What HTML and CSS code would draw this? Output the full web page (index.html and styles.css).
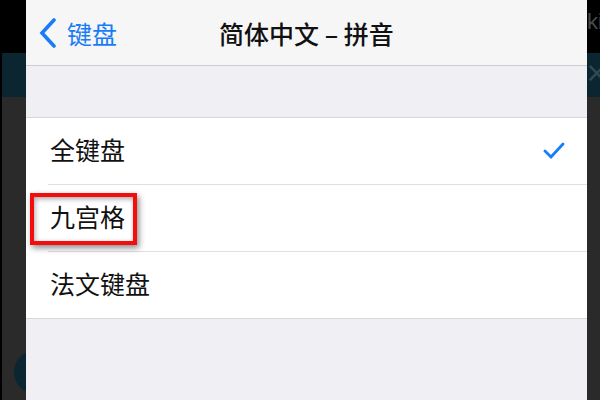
FILE: index.html
```html
<!DOCTYPE html>
<html lang="zh-CN">
<head>
  <meta charset="UTF-8">
  <title>简体中文 – 拼音</title>
  <link rel="stylesheet" href="styles.css">
</head>
<body>
  <div class="screen">
    <div class="side side-left">
      <div class="band-black"></div>
      <div class="band-teal"></div>
      <div class="band-dark">
        <div class="blob"></div>
      </div>
    </div>

    <div class="panel">
      <div class="navbar">
        <div class="back">
          <svg width="20" height="30" viewBox="0 0 20 30">
            <path d="M16 2 L4 15 L16 28" fill="none" stroke="#1a7cf5" stroke-width="3.6" stroke-linecap="round" stroke-linejoin="miter"/>
          </svg>
          <span>键盘</span>
        </div>
        <div class="title">简体中文 – 拼音</div>
      </div>

      <div class="gap"></div>

      <ul class="group">
        <li class="row">
          <div class="row-inner">
            <span>全键盘</span>
            <svg class="check" width="22" height="18" viewBox="0 0 22 18">
              <path d="M2 10 L8 16 L20 3" fill="none" stroke="#157efb" stroke-width="2.8" stroke-linecap="round" stroke-linejoin="miter"/>
            </svg>
          </div>
        </li>
        <li class="row">
          <div class="row-inner"><span>九宫格</span></div>
          <div class="mark"></div>
        </li>
        <li class="row">
          <div class="row-inner last"><span>法文键盘</span></div>
        </li>
      </ul>
    </div>

    <div class="side side-right">
      <div class="band-black"><span class="peek">ki</span></div>
      <div class="band-teal"><span class="peek-x">×</span></div>
      <div class="band-dark"></div>
    </div>
  </div>
</body>
</html>
```

FILE: styles.css
```css
html, body {
  margin: 0;
  padding: 0;
}
body {
  width: 600px;
  height: 400px;
  overflow: hidden;
  font-family: "Noto Sans CJK SC", "Noto Sans", sans-serif;
  background: #2a2a2a;
}
.screen {
  display: flex;
  height: 400px;
}

/* dimmed background on both sides */
.side {
  display: flex;
  flex-direction: column;
  overflow: hidden;
  flex-shrink: 0;
}
.side-left {
  width: 26px;
  border-left: 2px solid #000;
  box-sizing: border-box;
}
.side-right {
  width: 13px;
}
.band-black {
  height: 53px;
  background: #000;
  flex-shrink: 0;
}
.band-teal {
  height: 44px;
  background: #0b2630;
  flex-shrink: 0;
}
.band-dark {
  flex: 1;
  background: #2a2a2a;
}
.blob {
  width: 44px;
  height: 44px;
  border-radius: 50%;
  background: #0b2630;
  margin: 253px 0 0 12px;
}
.peek {
  display: block;
  color: #4a4a4a;
  font-size: 22px;
  line-height: 22px;
  margin: 11px 0 0 0;
  font-family: "Liberation Sans", sans-serif;
}
.peek-x {
  display: block;
  color: #2f4a52;
  font-size: 28px;
  line-height: 28px;
  margin: 6px 0 0 -2px;
  font-family: "DejaVu Sans", sans-serif;
}

/* settings screen */
.panel {
  width: 561px;
  flex-shrink: 0;
  background: #efeff4;
}
.navbar {
  height: 65px;
  background: #f6f6f7;
  border-bottom: 1px solid #cdcdd0;
  display: flex;
  align-items: center;
  position: relative;
}
.back {
  display: flex;
  align-items: center;
  gap: 9px;
  padding-left: 12px;
  color: #1a7cf5;
  font-size: 25px;
}
.back svg {
  margin-top: 1px;
}
.title {
  position: absolute;
  left: 0;
  right: 0;
  text-align: center;
  font-size: 25px;
  font-weight: 500;
  color: #111;
  padding-left: 0;
}
.gap {
  height: 51px;
}
.group {
  list-style: none;
  margin: 0;
  padding: 0;
  background: #fff;
  border-top: 1px solid #d8d8dc;
  border-bottom: 1px solid #d8d8dc;
}
.row {
  position: relative;
  padding-left: 22px;
}
.row-inner {
  height: 66px;
  border-bottom: 1px solid #e0e0e4;
  display: flex;
  align-items: center;
  justify-content: space-between;
  padding-left: 2px;
  padding-right: 22px;
  font-size: 25px;
  line-height: 1;
  color: #111;
}
.row-inner span {
  margin-top: -3px;
}
.row-inner.last {
  border-bottom: none;
}
.check {
  margin-top: -2px;
}

/* red highlight round 九宫格 */
.mark {
  position: absolute;
  left: 4px;
  top: 8px;
  width: 99px;
  height: 44px;
  border: 4px solid #f30d0d;
  box-shadow: 2px 3px 6px rgba(0, 0, 0, 0.45), inset 1px 2px 5px rgba(0, 0, 0, 0.35);
}
```
